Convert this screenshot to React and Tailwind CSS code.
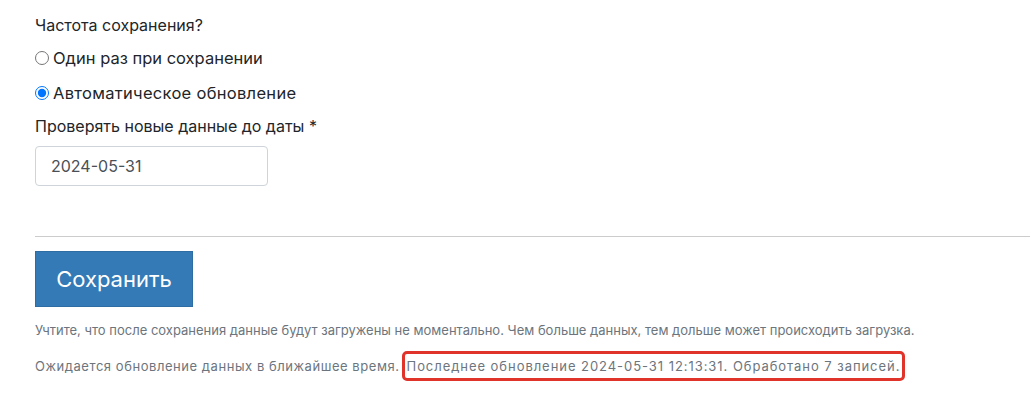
export default function App() {
  return (
    <div className="min-h-[395px] bg-white pl-[35px] pt-[13px] font-['Inter',sans-serif] text-[#212529]">
      <div className="text-[16px] leading-[24px]">Частота сохранения?</div>

      <label className="mt-[9px] flex h-[24px] items-center gap-[4px] text-[16.5px]">
        <input type="radio" name="freq" className="m-0 h-[14px] w-[14px]" />
        <span>Один раз при сохранении</span>
      </label>
      <label className="mt-[11px] flex h-[24px] items-center gap-[4px] text-[16.5px] tracking-[0.3px]">
        <input type="radio" name="freq" defaultChecked className="m-0 h-[14px] w-[14px]" />
        <span>Автоматическое обновление</span>
      </label>

      <div className="mt-[9px] text-[16px] leading-[24px]">Проверять новые данные до даты *</div>
      <input
        type="text"
        defaultValue="2024-05-31"
        className="mt-[8px] block h-[40px] w-[233px] rounded-[4px] border border-[#ced4da] px-[15px] text-[16px] text-[#495057] outline-none"
      />

      <hr className="mt-[50px] border-0 border-t border-[#cccccc]" />

      <button className="mt-[14px] block h-[56px] w-[158px] border border-[#2e6da4] bg-[#337ab7] text-[22px] text-white">
        Сохранить
      </button>

      <p className="mt-[13px] text-[13px] leading-[20px] text-[#6c757d]">
        Учтите, что после сохранения данные будут загружены не моментально. Чем больше данных, тем дольше может происходить загрузка.
      </p>
      <p className="mt-[16px] text-[13px] leading-[20px] text-[#6c757d]">
        <span className="tracking-[0.55px]">Ожидается обновление данных в ближайшее время.</span>
        <span className="ml-[2px] rounded-[5px] border-[3px] border-[#e0342b] px-[2px] py-[4px] tracking-[0.95px]">
          Последнее обновление 2024-05-31 12:13:31. Обработано 7 записей.
        </span>
      </p>
    </div>
  );
}
